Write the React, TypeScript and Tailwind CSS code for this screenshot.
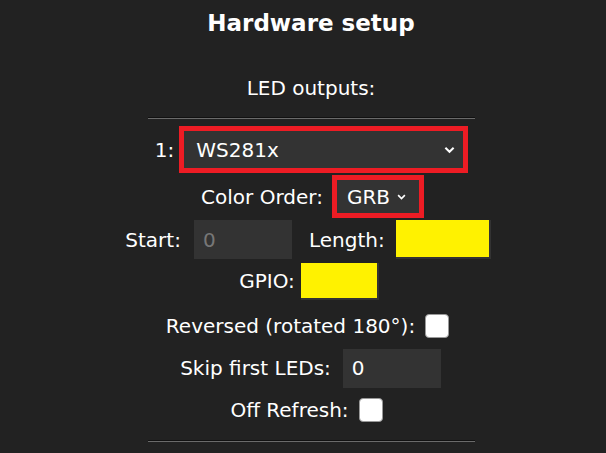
import React from "react";

const font = { fontFamily: '"DejaVu Sans", Verdana, sans-serif' };

function Chevron({ className = "" }: { className?: string }) {
  return (
    <svg viewBox="0 0 12 8" className={className} fill="none" stroke="white" strokeWidth="2.2">
      <path d="M1.5 1.5 L6 6 L10.5 1.5" />
    </svg>
  );
}

function Checkbox() {
  return <div className="w-[24px] h-[24px] bg-white rounded-[4px] border border-[#999]" />;
}

function Hr() {
  return (
    <div className="w-[327px] mx-auto">
      <div className="h-px bg-[#111]" />
      <div className="h-px bg-[#6a6a6a]" />
    </div>
  );
}

export default function App() {
  return (
    <div
      className="w-[606px] h-[453px] bg-[#222222] text-white overflow-hidden flex flex-col items-center text-[20px] pl-[16px]"
      style={font}
    >
      <h2 className="font-bold text-[23px] leading-none mt-[11px] h-[24px] flex items-center">Hardware setup</h2>
      <div className="mt-[41px] h-[24px] leading-none flex items-center">LED outputs:</div>
      <div className="mt-[17px] w-full">
        <Hr />
      </div>
      {/* Row 1 */}
      <div className="mt-[7px] h-[47px] flex items-center ml-[1px]">
        <span className="mr-[5px]">1:</span>
        <div className="w-[289px] h-[47px] border-[5px] border-[#ed1c24] bg-[#333] flex items-center pl-[12px] pr-[8px] justify-between">
          <span>WS281x</span>
          <Chevron className="w-[11px] h-[8px]" />
        </div>
      </div>
      {/* Color order */}
      <div className="mt-[2px] h-[43px] flex items-center ml-[3px]">
        <span className="mr-[9px]">Color Order:</span>
        <div className="w-[92px] h-[43px] border-[5px] border-[#ed1c24] bg-[#333] flex items-center pl-[10px]">
          <span>GRB</span>
          <Chevron className="w-[9px] h-[6px] ml-[7px]" />
        </div>
      </div>
      {/* Start / Length */}
      <div className="mt-[2px] h-[39px] flex items-center ml-[-6px]">
        <span className="mr-[13px]">Start:</span>
        <div className="w-[98px] h-[39px] bg-[#333] flex items-center pl-[9px] text-[#777]">0</div>
        <span className="ml-[17px] mr-[11px]">Length:</span>
        <div className="w-[95px] h-[39px] bg-[#fff200] border-r-[2px] border-b-[2px] border-[#333]" />
      </div>
      {/* GPIO */}
      <div className="mt-[4px] h-[36px] flex items-center ml-[-4px]">
        <span className="mr-[6px]">GPIO:</span>
        <div className="w-[78px] h-[37px] bg-[#fff200] border-r-[2px] border-b-[2px] border-[#333]" />
      </div>
      {/* Reversed */}
      <div className="mt-[4px] h-[46px] flex items-center ml-[-7px]">
        <span className="mr-[10px]">Reversed (rotated 180°):</span>
        <Checkbox />
      </div>
      {/* Skip */}
      <div className="mt-[-1px] h-[40px] flex items-center ml-[-1px]">
        <span className="mr-[12px]">Skip first LEDs:</span>
        <div className="w-[98px] h-[39px] bg-[#333] flex items-center pl-[9px]">0</div>
      </div>
      {/* Off refresh */}
      <div className="mt-[1px] h-[42px] flex items-center ml-[-9px]">
        <span className="mr-[10px]">Off Refresh:</span>
        <Checkbox />
      </div>
      <div className="mt-[9px] w-full">
        <Hr />
      </div>
    </div>
  );
}
